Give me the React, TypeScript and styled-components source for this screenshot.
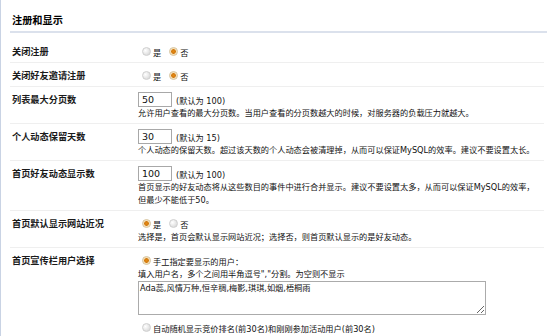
import React from "react"
import styled, { createGlobalStyle } from "styled-components"

const GlobalStyle = createGlobalStyle`
  html, body {
    margin: 0;
    padding: 0;
    background: #ffffff;
  }
  body {
    font-family: "DejaVu Sans", "Noto Sans CJK SC", sans-serif;
    color: #111111;
  }
`

type Option = { text: string; checked?: boolean }

const Choices = ({ options }: { options: Option[] }) => (
    <Line>
        {options.map((o) => (
            <Choice key={o.text}>
                <Radio $checked={o.checked} />
                <span>{o.text}</span>
            </Choice>
        ))}
    </Line>
)

const Settings = () => {
    return (
        <Page>
            <GlobalStyle />
            <Header>
                <Title>注册和显示</Title>
            </Header>

            <Row>
                <Label>关闭注册</Label>
                <Field>
                    <Choices options={[{ text: "是" }, { text: "否", checked: true }]} />
                </Field>
            </Row>

            <Row>
                <Label>关闭好友邀请注册</Label>
                <Field>
                    <Choices options={[{ text: "是" }, { text: "否", checked: true }]} />
                </Field>
            </Row>

            <Row>
                <Label>列表最大分页数</Label>
                <Field>
                    <Line>
                        <NumInput defaultValue="50" />
                        <Default>(默认为 100)</Default>
                    </Line>
                    <Desc>允许用户查看的最大分页数。当用户查看的分页数越大的时候，对服务器的负载压力就越大。</Desc>
                </Field>
            </Row>

            <Row>
                <Label>个人动态保留天数</Label>
                <Field>
                    <Line>
                        <NumInput defaultValue="30" />
                        <Default>(默认为 15)</Default>
                    </Line>
                    <Desc>个人动态的保留天数。超过该天数的个人动态会被清理掉，从而可以保证MySQL的效率。建议不要设置太长。</Desc>
                </Field>
            </Row>

            <Row>
                <Label>首页好友动态显示数</Label>
                <Field>
                    <Line>
                        <NumInput defaultValue="100" />
                        <Default>(默认为 100)</Default>
                    </Line>
                    <Desc>
                        首页显示的好友动态将从这些数目的事件中进行合并显示。建议不要设置太多，从而可以保证MySQL的效率，
                        <br />
                        但最少不能低于50。
                    </Desc>
                </Field>
            </Row>

            <Row>
                <Label>首页默认显示网站近况</Label>
                <Field>
                    <Choices options={[{ text: "是", checked: true }, { text: "否" }]} />
                    <Desc>选择是，首页会默认显示网站近况；选择否，则首页默认显示的是好友动态。</Desc>
                </Field>
            </Row>

            <Row>
                <Label>首页宣传栏用户选择</Label>
                <Field>
                    <Choices options={[{ text: "手工指定要显示的用户：", checked: true }]} />
                    <Desc>填入用户名，多个之间用半角逗号","分割。为空则不显示</Desc>
                    <Names defaultValue="Ada蕊,风情万种,恒辛稠,梅影,琪琪,如烟,梧桐雨" />
                    <Choices options={[{ text: "自动随机显示竞价排名(前30名)和刚刚参加活动用户(前30名)" }]} />
                </Field>
            </Row>
        </Page>
    )
}

const Page = styled.div`
    width: 553px;
    height: 336px;
    box-sizing: border-box;
    border-left: 1px solid #c9d3e4;
    padding: 0 6px 0 9px;
    overflow: hidden;
`
const Header = styled.div`
    padding: 14px 0 4px 2px;
    border-bottom: 2px solid #dbe1ec;
    margin-bottom: 6px;
`
const Title = styled.h2`
    margin: 0;
    font-size: 10.2px;
    line-height: 13px;
    font-weight: bold;
    color: #000000;
`
const Row = styled.div`
    display: grid;
    grid-template-columns: 126px 1fr;
    padding: 5px 0 3px 2px;
    margin-right: 3px;
    border-bottom: 1px solid #efefef;
`
const Label = styled.div`
    font-size: 9.2px;
    line-height: 15px;
    font-weight: bold;
    color: #1a1a1a;
`
const Field = styled.div`
    display: flex;
    flex-direction: column;
    align-items: flex-start;
    font-size: 8.2px;
`
const Line = styled.div`
    display: flex;
    align-items: center;
    height: 15px;
    font-size: 8.2px;
`
const Choice = styled.label`
    display: inline-flex;
    align-items: center;
    margin-left: 4px;
    margin-right: 4px;
    gap: 2px;
`
const Radio = styled.span<{ $checked?: boolean }>`
    display: inline-block;
    width: 9px;
    height: 9px;
    border-radius: 50%;
    box-sizing: border-box;
    border: 1px solid ${(p) => (p.$checked ? "#d6c29a" : "#cfcfcf")};
    background: ${(p) =>
        p.$checked
            ? "radial-gradient(circle at 50% 50%, #e58a12 0, #d27a10 2px, #f3d8a8 2.6px, #fbf3e4 4px)"
            : "radial-gradient(circle at 35% 35%, #ffffff 0, #f1f1f1 2px, #dedede 4.5px)"};
`
const NumInput = styled.input`
    width: 34px;
    height: 15px;
    box-sizing: border-box;
    border: 1px solid #a8a8a8;
    padding: 0 3px;
    margin: 0;
    font-family: "DejaVu Sans", sans-serif;
    font-size: 9.5px;
    color: #111111;
    outline: none;
`
const Default = styled.span`
    margin-left: 4px;
`
const Desc = styled.div`
    line-height: 13px;
    white-space: nowrap;
`
const Names = styled.textarea`
    display: block;
    width: 348px;
    height: 34px;
    box-sizing: border-box;
    border: 1px solid #ababab;
    padding: 1px 1px;
    margin: 0 0 5px 0;
    font-family: "DejaVu Sans", "Noto Sans CJK SC", sans-serif;
    font-size: 8.2px;
    line-height: 11px;
    color: #111111;
    outline: none;
`

export default Settings
